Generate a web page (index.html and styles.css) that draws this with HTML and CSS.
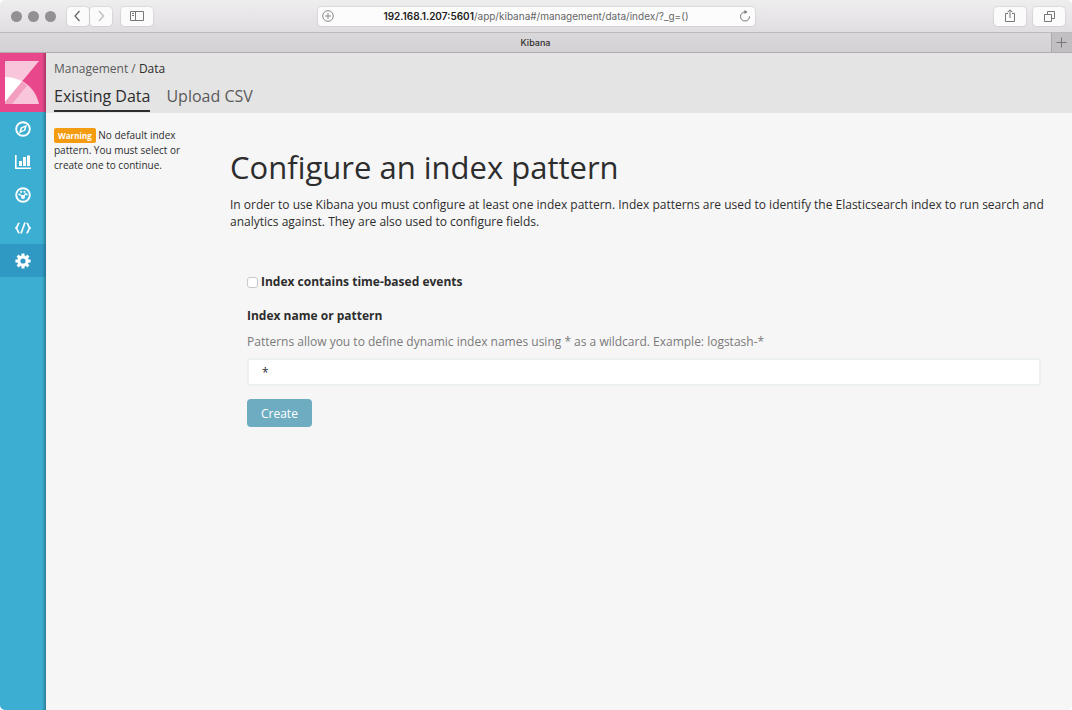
FILE: index.html
```html
<!DOCTYPE html>
<html lang="en">
<head>
<meta charset="utf-8">
<meta name="viewport" content="width=device-width, initial-scale=1">
<title>Kibana</title>
<link rel="stylesheet" href="styles.css">
</head>
<body>
<div class="window">
  <div class="toolbar">
    <div class="toolbar-left">
      <div class="lights"><span class="light"></span><span class="light"></span><span class="light"></span></div>
      <div class="nav-buttons">
        <button class="tool-button nav-button" type="button" aria-label="Back"><svg width="22" height="18" viewBox="0 0 22 18"><path d="M12.500 4 8 9l4.500 5" fill="none" stroke="#666" stroke-width="1.300"/></svg></button>
        <button class="tool-button nav-button" type="button" aria-label="Forward" disabled><svg width="22" height="18" viewBox="0 0 22 18"><path d="m9 4 4.500 5L9 14" fill="none" stroke="#bbb" stroke-width="1.300"/></svg></button>
      </div>
      <button class="tool-button" type="button" aria-label="Show sidebar"><svg width="32" height="18" viewBox="0 0 32 18"><g fill="none" stroke="#777" stroke-width="1"><path d="M9.500 4.500h13v9h-13zM14.500 4.500v9M11 6.500h2M11 8.500h2"/></g></svg></button>
    </div>
    <div class="address">
      <svg width="12" height="12" viewBox="0 0 12 12"><g fill="none" stroke="#888"><circle cx="6" cy="6" r="5.300"/><path d="M6 3v6M3 6h6"/></g></svg>
      <div class="url"><strong>192.168.1.207:5601</strong>/app/kibana#/management/data/index/?_g=()</div>
      <svg width="12" height="12" viewBox="0 0 12 12"><path d="M10.500 6.300A4.500 4.500 0 1 1 6 2h1" fill="none" stroke="#777"/><path d="M5.500 0 8.500 2 5.500 4z" fill="#777"/></svg>
    </div>
    <div class="toolbar-right">
      <button class="tool-button" type="button" aria-label="Share"><svg width="32" height="18" viewBox="0 0 32 18"><path d="M14 6.500h-2.500v8h9v-8H18M16 11V3M13.500 5.300 16 2.800l2.500 2.500" fill="none" stroke="#777"/></svg></button>
      <button class="tool-button" type="button" aria-label="Show all tabs"><svg width="32" height="18" viewBox="0 0 32 18"><path d="M11.500 7.500h7v7h-7zM14.500 7.500v-3h7v7h-3" fill="none" stroke="#777"/></svg></button>
    </div>
  </div>
  <div class="tabbar">
    <div class="tab-title">Kibana</div>
    <button class="new-tab" type="button" aria-label="New tab"><svg width="12" height="12" viewBox="0 0 12 12"><path d="M5.500 .5v10M.5 5.500h10" stroke="#777" fill="none"/></svg></button>
  </div>
  <div class="app">
    <nav class="sidebar" aria-label="Apps">
      <a class="logo" href="#" aria-label="Kibana"><svg width="34" height="44" viewBox="0 0 34 44"><path d="M0 0h34L0 41z" fill="#f9c5da"/><path d="M0 43V16c17 0 30 10 34 27z" fill="#f9c5da"/><path d="M0 16c7 0 12 1.500 17 4.500L0 41z" fill="#fff"/><path d="M17 20.500 22 24.500 7 43H0v-2z" fill="#f39fc0"/></svg></a>
      <a class="app-link" href="#" aria-label="Discover"><svg width="16" height="16" viewBox="0 0 16 16"><circle cx="8" cy="8" r="6.800" fill="none" stroke="#fff" stroke-width="1.900"/><path fill="#fff" fill-rule="evenodd" d="m12 3.700-1.600 5.700L4 12.500l1.600-5.900zM9 8.900 9.600 6.300 7 7.600 6.400 9.800z"/></svg></a>
      <a class="app-link" href="#" aria-label="Visualize"><svg width="16" height="16" viewBox="0 0 16 16"><path d="M0 1h1.600v12.400H16V15H0zM4 7h3v5H4zM8 3h3v9H8zM12 1.500h3V12h-3z" fill="#fff"/></svg></a>
      <a class="app-link" href="#" aria-label="Dashboard"><svg width="16" height="16" viewBox="0 0 16 16"><circle cx="8" cy="8" r="6.800" fill="none" stroke="#fff" stroke-width="1.900"/><g fill="#fff"><circle cx="4.500" cy="7.500" r="1.100"/><circle cx="6.200" cy="4.800" r="1.100"/><circle cx="9.500" cy="4.800" r="1.100"/><circle cx="11.500" cy="7.500" r="1.100"/><circle cx="8" cy="10" r="2"/></g><path d="M8 10 11 6M8 10 5.200 7.600" stroke="#fff" stroke-width="1.200"/></svg></a>
      <a class="app-link" href="#" aria-label="Dev Tools"><svg width="16" height="16" viewBox="0 0 16 16"><path d="M4.500 3C2 3.500 3.500 6.500 1 8c2.500 1.500 1 4.500 3.500 5M11.500 3c2.500.5 1 3.500 3.500 5-2.500 1.500-1 4.500-3.500 5M10 2.500 6 13.500" fill="none" stroke="#fff" stroke-width="1.700"/></svg></a>
      <a class="app-link active" href="#" aria-label="Management" aria-current="page"><svg width="16" height="16" viewBox="0 0 16 16"><circle cx="8" cy="8" r="4.200" fill="none" stroke="#fff" stroke-width="3.200"/><g stroke="#fff" stroke-width="3"><path d="M8 .4v3M8 12.600v3M.4 8h3M12.600 8h3M2.600 2.600l2.200 2.200M11.200 11.200l2.200 2.200M13.400 2.600l-2.200 2.200M4.800 11.200l-2.200 2.200"/></g></svg></a>
    </nav>
    <div class="workspace">
      <header class="page-header">
        <div class="breadcrumb"><a href="#">Management</a> / <span class="current">Data</span></div>
        <nav class="page-tabs" aria-label="Data"><a class="page-tab selected" href="#">Existing Data</a><a class="page-tab" href="#">Upload CSV</a></nav>
      </header>
      <div class="columns">
        <aside class="notice"><span class="badge">Warning</span> No default index pattern. You must select or create one to continue.</aside>
        <main class="content">
          <h1 class="title">Configure an index pattern</h1>
          <p class="intro">In order to use Kibana you must configure at least one index pattern. Index patterns are used to identify the Elasticsearch index to run search and analytics against. They are also used to configure fields.</p>
          <form class="form">
            <div class="check-row"><input class="check" type="checkbox" id="time-based"><label for="time-based">Index contains time-based events</label></div>
            <label class="field-label" for="pattern">Index name or pattern</label>
            <p class="help">Patterns allow you to define dynamic index names using * as a wildcard. Example: logstash-*</p>
            <input class="field" type="text" id="pattern" value="*">
            <button class="create" type="button">Create</button>
          </form>
        </main>
      </div>
    </div>
  </div>
</div>
</body>
</html>
```
FILE: styles.css
```css
* { box-sizing: border-box; }

body {
  margin: 0;
  background: #fff;
  color: #2d2d2d;
  font-family: "Open Sans", sans-serif;
  font-size: 12px;
}

a { color: inherit; text-decoration: none; }
svg { display: block; }

.window {
  display: flex;
  flex-direction: column;
  min-height: 100vh;
  overflow: hidden;
  border-radius: 5px;
  background: #f6f6f6;
}

.toolbar {
  display: grid;
  grid-template-columns: 1fr minmax(0, 437px) 1fr;
  align-items: center;
  height: 33px;
  border-bottom: 1px solid #bcbabc;
  background: linear-gradient(#efeeef, #e0dee0);
}

.toolbar-left { display: flex; align-items: center; gap: 9px; padding-left: 11px; }
.toolbar-right { display: flex; justify-content: flex-end; gap: 7px; padding-right: 7px; }
.lights { display: flex; gap: 6px; padding-right: 2px; }
.light { width: 11px; height: 11px; border-radius: 50%; background: #929094; }
.nav-buttons { display: flex; gap: 1px; }

.tool-button {
  display: flex;
  justify-content: center;
  align-items: center;
  height: 19px;
  padding: 0;
  border: 0;
  border-radius: 4px;
  background: #fbfbfb;
  box-shadow: 0 0 1px 1px rgba(0, 0, 0, 0.07);
}

.address {
  display: flex;
  align-items: center;
  height: 19px;
  padding: 0 4px;
  border-radius: 4px;
  background: #fcfcfc;
  box-shadow: 0 0 1px 1px rgba(0, 0, 0, 0.07);
}

.url {
  flex: 1;
  overflow: hidden;
  color: #666;
  font: 10px/16px Inter, sans-serif;
  text-align: center;
  white-space: nowrap;
}

.url strong { color: #222; font-weight: 600; }

.tabbar {
  display: flex;
  height: 20px;
  border-bottom: 1px solid #aeacae;
  background: linear-gradient(#dad8da, #d3d1d3);
  font: 500 9px/19px Inter, sans-serif;
}

.tab-title { flex: 1; padding-left: 20px; text-align: center; }

.new-tab {
  display: flex;
  justify-content: center;
  align-items: center;
  width: 21px;
  padding: 0;
  border: 0;
  border-left: 1px solid #aaa8aa;
  background: #c1bfc1;
}

.app { display: flex; flex: 1; }

.sidebar {
  width: 46px;
  flex: none;
  background: linear-gradient(to left, rgba(0, 0, 0, 0.28), transparent 4px), #3caed2;
}

.logo {
  display: block;
  height: 59px;
  padding: 8px 5px;
  background: linear-gradient(to left, rgba(0, 0, 0, 0.28), transparent 4px), #e8478b;
}

.app-link { display: flex; justify-content: center; align-items: center; height: 33px; }
.app-link.active { background: linear-gradient(to left, rgba(0, 0, 0, 0.22), transparent 4px), #3099c3; }

.workspace { flex: 1; min-width: 0; }

.page-header {
  display: flex;
  flex-direction: column;
  justify-content: space-between;
  height: 60px;
  padding: 7px 8px 1px;
  background: #e4e4e4;
  color: #5a5a5a;
}

.breadcrumb { line-height: 18px; }
.breadcrumb .current { color: #2d2d2d; }
.page-tabs { display: flex; gap: 16px; }
.page-tab { height: 27px; border-bottom: 2px solid transparent; font-size: 16px; line-height: 22px; }
.page-tab.selected { border-color: #2d2d2d; color: #2d2d2d; }

.columns { display: flex; }

.notice {
  width: 184px;
  flex: none;
  padding: 15px 40px 0 8px;
  font-size: 10px;
  line-height: 15px;
}

.badge {
  display: inline-block;
  padding: 0 4px;
  border-radius: 2px;
  background: #f39c12;
  color: #fff;
  font-size: 8px;
  font-weight: 700;
  line-height: 15px;
  vertical-align: top;
}

.content { flex: 1; min-width: 0; padding: 32px 14px 24px 0; }
.title { margin: 0; font-size: 31px; font-weight: 400; line-height: 44px; }
.intro { margin: 7px 0 0; line-height: 17px; }

.form { padding: 42px 17px 0; }
.check-row { display: flex; align-items: center; gap: 3px; font-weight: 700; line-height: 20px; }

.check {
  appearance: none;
  width: 11px;
  height: 11px;
  margin: 0;
  border: 1px solid #c8c8c8;
  border-radius: 3px;
  background: #fff;
}

.check:checked { background: #3caed2; }
.field-label { display: block; margin-top: 14px; font-weight: 700; line-height: 20px; }
.help { margin: 7px 0; color: #7a7a7a; line-height: 18px; }

.field {
  display: block;
  width: 100%;
  height: 28px;
  padding: 0 13px;
  border: 2px solid #ecf0f1;
  border-radius: 4px;
  background: #fff;
  color: #2d2d2d;
  font: 12px "Open Sans", sans-serif;
}

.create {
  height: 28px;
  margin-top: 13px;
  padding: 0 14px;
  border: 0;
  border-radius: 4px;
  background: #6eadc1;
  color: #fff;
  font: 12px "Open Sans", sans-serif;
}
```
